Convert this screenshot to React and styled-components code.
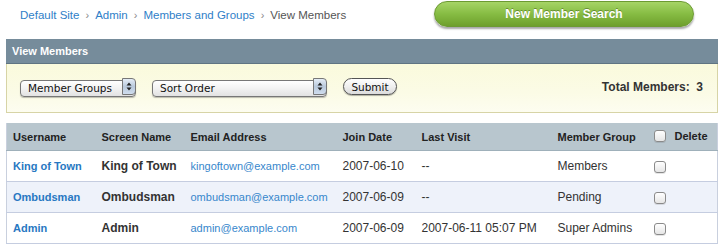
import React from "react";
import styled, { createGlobalStyle } from "styled-components";

const GlobalStyle = createGlobalStyle`
  body {
    margin: 0;
    background: #ffffff;
    font-family: "Liberation Sans", Arial, sans-serif;
  }
`;

const Page = styled.div`
  width: 724px;
  padding: 0 6px;
  box-sizing: border-box;
`;

const TopBar = styled.div`
  display: flex;
  align-items: center;
  justify-content: space-between;
  height: 39px;
  padding: 0 24px 0 14px;
  box-sizing: border-box;
`;

const Crumbs = styled.nav`
  display: flex;
  align-items: center;
  gap: 6px;
  font-size: 11.5px;
  margin-top: -9px;
`;

const Crumb = styled.a`
  color: ${(p) => (p.$current ? "#555" : "#2f80c8")};
  text-decoration: none;
`;

const Sep = styled.span`
  color: #888;
  font-size: 11px;
`;

const GreenButton = styled.button`
  width: 260px;
  height: 26px;
  margin-top: -11px;
  border-radius: 13px;
  border: 1px solid #6c9a32;
  background: linear-gradient(#a6d466, #86bc43 50%, #6e9f2c);
  box-shadow: 0 2px 2px rgba(0, 0, 0, 0.35);
  color: #fff;
  font-family: "Liberation Sans", Arial, sans-serif;
  font-weight: bold;
  font-size: 12px;
  text-shadow: 0 -1px 0 rgba(60, 90, 20, 0.5);
`;

const PanelHead = styled.div`
  height: 25px;
  box-sizing: border-box;
  display: flex;
  align-items: center;
  padding-left: 6px;
  background: #768c9b;
  border-bottom: 1px solid #5f7482;
  color: #fff;
  font-weight: bold;
  font-size: 11px;
`;

const FilterBar = styled.form`
  display: flex;
  align-items: center;
  height: 49px;
  box-sizing: border-box;
  padding: 0 0 3px 13px;
  background: linear-gradient(#fafadc, #fbfbe6 60%, #fdfdf0);
  border: 1px solid #d7d4a6;
  border-top: none;
`;

const SelectWrap = styled.div`
  position: relative;
  width: ${(p) => p.$w}px;
  height: 17px;
  margin-right: ${(p) => p.$gap}px;
`;

const Select = styled.select`
  appearance: none;
  width: 100%;
  height: 100%;
  box-sizing: border-box;
  border: 1px solid #777;
  border-radius: 4px;
  background: linear-gradient(#ffffff, #f2f2f2 50%, #e2e2e2);
  box-shadow: 0 1px 1px rgba(0, 0, 0, 0.25);
  padding: 0 0 0 7px;
  font-family: "DejaVu Sans", Verdana, sans-serif;
  font-size: 10.5px;
  color: #111;
`;

const Arrows = styled.span`
  position: absolute;
  right: 0;
  top: 0;
  width: 14px;
  height: 17px;
  box-sizing: border-box;
  border: 1px solid #777;
  border-radius: 0 4px 4px 0;
  background: linear-gradient(#e4ecf6, #b9c9dc 50%, #cfdced);
  display: flex;
  align-items: center;
  justify-content: center;
  pointer-events: none;
`;

const SubmitButton = styled.button`
  width: 54px;
  height: 17px;
  border: 1px solid #555;
  border-radius: 9px;
  background: linear-gradient(#ffffff, #efefef 50%, #dcdcdc);
  box-shadow: 0 1px 1px rgba(0, 0, 0, 0.3);
  font-family: "DejaVu Sans", Verdana, sans-serif;
  font-size: 10.5px;
  color: #111;
  padding: 0;
`;

const Total = styled.div`
  margin-left: auto;
  margin-right: 14px;
  font-weight: bold;
  font-size: 12px;
  color: #333;
  white-space: pre;
`;

const Table = styled.table`
  margin-top: 10px;
  width: 712px;
  border-collapse: collapse;
  table-layout: fixed;
  border-left: 1px solid #c9d0de;
  border-right: 1px solid #c9d0de;
`;

const HeadCell = styled.th`
  background: #b8c6ce;
  height: 27px;
  padding: 0 0 0 6px;
  text-align: left;
  font-size: 11px;
  font-weight: bold;
  color: #222;
  border-bottom: 1px solid #9fb0ba;
`;

const HeadInner = styled.span`
  display: inline-flex;
  align-items: center;
  gap: 9px;
  line-height: 12px;
`;

const Row = styled.tr`
  background: ${(p) => (p.$alt ? "#eef2fa" : "#ffffff")};
`;

const Cell = styled.td`
  height: 30px;
  padding: 0 0 0 6px;
  border-bottom: 1px solid #c5cde0;
  font-size: ${(p) => (p.$strong ? "12px" : p.$small ? "11px" : p.$link ? "11px" : "12px")};
  font-weight: ${(p) => (p.$strong || p.$link ? "bold" : "normal")};
  color: ${(p) => (p.$link ? "#2878c2" : p.$small ? "#3787cc" : "#333")};
  white-space: nowrap;
  overflow: hidden;
`;

const Check = styled.span`
  display: inline-block;
  vertical-align: middle;
  width: 12px;
  height: 12px;
  box-sizing: border-box;
  border: 1px solid #8a8a8a;
  border-radius: 3px;
  background: linear-gradient(#ffffff, #e6e6e6);
  box-shadow: 0 1px 0 rgba(0, 0, 0, 0.1);
`;

const ArrowIcon = () => (
  <svg width="6" height="9" viewBox="0 0 6 9">
    <path d="M3 0.5 L5.5 3.5 H0.5 Z M3 8.5 L0.5 5.5 H5.5 Z" fill="#222" />
  </svg>
);

const members = [
  { user: "King of Town", email: "kingoftown@example.com", joined: "2007-06-10", visit: "--", group: "Members" },
  { user: "Ombudsman", email: "ombudsman@example.com", joined: "2007-06-09", visit: "--", group: "Pending" },
  { user: "Admin", email: "admin@example.com", joined: "2007-06-09", visit: "2007-06-11 05:07 PM", group: "Super Admins" },
];

const columns = [
  { label: "Username", w: 89 },
  { label: "Screen Name", w: 89 },
  { label: "Email Address", w: 152 },
  { label: "Join Date", w: 79 },
  { label: "Last Visit", w: 136 },
  { label: "Member Group", w: 96 },
];

export default function App() {
  return (
    <Page>
      <GlobalStyle />
      <TopBar>
        <Crumbs>
          <Crumb href="#">Default Site</Crumb>
          <Sep>›</Sep>
          <Crumb href="#">Admin</Crumb>
          <Sep>›</Sep>
          <Crumb href="#">Members and Groups</Crumb>
          <Sep>›</Sep>
          <Crumb $current>View Members</Crumb>
        </Crumbs>
        <GreenButton>New Member Search</GreenButton>
      </TopBar>

      <PanelHead>View Members</PanelHead>
      <FilterBar onSubmit={(e) => e.preventDefault()}>
        <SelectWrap $w={116} $gap={16}>
          <Select defaultValue="groups">
            <option value="groups">Member Groups</option>
          </Select>
          <Arrows>
            <ArrowIcon />
          </Arrows>
        </SelectWrap>
        <SelectWrap $w={175} $gap={16}>
          <Select defaultValue="sort">
            <option value="sort">Sort Order</option>
          </Select>
          <Arrows>
            <ArrowIcon />
          </Arrows>
        </SelectWrap>
        <SubmitButton type="submit">Submit</SubmitButton>
        <Total>{"Total Members:  3"}</Total>
      </FilterBar>

      <Table>
        <colgroup>
          {columns.map((c) => (
            <col key={c.label} style={{ width: c.w }} />
          ))}
          <col />
        </colgroup>
        <thead>
          <tr>
            {columns.map((c) => (
              <HeadCell key={c.label}>{c.label}</HeadCell>
            ))}
            <HeadCell>
              <HeadInner>
                <Check />
                Delete
              </HeadInner>
            </HeadCell>
          </tr>
        </thead>
        <tbody>
          {members.map((m, i) => (
            <Row key={m.user} $alt={i === 1}>
              <Cell $link>{m.user}</Cell>
              <Cell $strong>{m.user}</Cell>
              <Cell $small>{m.email}</Cell>
              <Cell>{m.joined}</Cell>
              <Cell>{m.visit}</Cell>
              <Cell>{m.group}</Cell>
              <Cell>
                <Check />
              </Cell>
            </Row>
          ))}
        </tbody>
      </Table>
    </Page>
  );
}
